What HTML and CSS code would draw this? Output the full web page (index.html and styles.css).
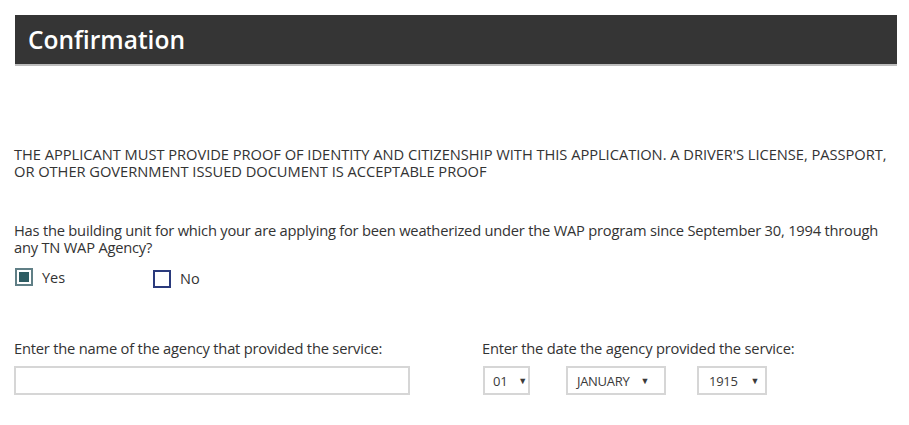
FILE: index.html
```html
<!DOCTYPE html>
<html>
<head>
<meta charset="utf-8">
<link rel="stylesheet" href="styles.css">
</head>
<body>
<div class="page">
  <div class="header"><h1>Confirmation</h1></div>
  <p class="notice">THE APPLICANT MUST PROVIDE PROOF OF IDENTITY AND CITIZENSHIP WITH THIS APPLICATION. A DRIVER'S LICENSE, PASSPORT, OR OTHER GOVERNMENT ISSUED DOCUMENT IS ACCEPTABLE PROOF</p>
  <p class="question">Has the building unit for which your are applying for been weatherized under the WAP program since September 30, 1994 through any TN WAP Agency?</p>
  <div class="choices">
    <label class="choice yes"><span class="box checked"><span class="fill"></span></span>Yes</label>
    <label class="choice no"><span class="box"></span>No</label>
  </div>
  <div class="fields">
    <div class="field agency">
      <div class="label">Enter the name of the agency that provided the service:</div>
      <div class="textbox"></div>
    </div>
    <div class="field date">
      <div class="label">Enter the date the agency provided the service:</div>
      <div class="selects">
        <div class="select s-day">01<span class="arrow">&#9660;</span></div>
        <div class="select s-month">JANUARY<span class="arrow">&#9660;</span></div>
        <div class="select s-year">1915<span class="arrow">&#9660;</span></div>
      </div>
    </div>
  </div>
</div>
</body>
</html>
```
FILE: styles.css
```css
* { box-sizing: border-box; }
html, body { margin: 0; padding: 0; background: #fff; }
body {
  font-family: "Open Sans", "Noto Sans", sans-serif;
  color: #333;
  font-size: 14.7px;
}
.page { padding: 15px 12px 0 14px; }
.header {
  background: #353535;
  height: 51px;
  margin-left: 1px;
  border-bottom: 2px solid #bdbdbd;
  padding-left: 13px;
  display: flex;
  align-items: center;
}
.header h1 {
  margin: 0;
  color: #fff;
  font-size: 24.5px;
  font-weight: 600;
}
.notice {
  margin: 80px 0 0 0;
  line-height: 17px;
  letter-spacing: -0.04px;
}
.question {
  margin: 42px 0 0 0;
  line-height: 17px;
  letter-spacing: -0.22px;
}
.choices { display: flex; margin-top: 10px; height: 22px; align-items: center; }
.choice { display: flex; align-items: center; gap: 9px; font-size: 14.5px; }
.choice.yes { width: 138px; margin-left: 1px; }
.box {
  width: 18px; height: 18px;
  border: 2px solid #2a3a7c;
  background: #fff;
  display: inline-block;
}
.box.checked {
  border: 2px solid #607f86;
  padding: 2px;
}
.box .fill { display: block; width: 100%; height: 100%; background: #2e5c62; }
.choice.no .box { margin-top: 2px; }
.choice.no { padding-top: 2px; }
.fields { display: flex; margin-top: 51px; }
.field.agency { width: 468px; }
.label { line-height: 18px; letter-spacing: -0.2px; }
.textbox {
  margin-top: 9px;
  width: 396px;
  height: 29px;
  border: 2px solid #d6d6d6;
}
.selects { display: flex; margin-top: 9px; margin-left: 1px; }
.select {
  height: 29px;
  border: 2px solid #d6d6d6;
  display: flex;
  align-items: center;
  font-size: 13px;
  padding-left: 8px;
  letter-spacing: -0.3px;
  color: #3a3a3a;
}
.arrow { font-size: 9px; margin-left: 11px; }
.s-day { width: 47px; margin-right: 36px; }
.s-month { width: 100px; margin-right: 31px; padding-left: 9px; }
.s-month .arrow { margin-left: 11px; }
.s-year { width: 70px; padding-left: 10px; }
.s-year .arrow { margin-left: 13px; }
```
